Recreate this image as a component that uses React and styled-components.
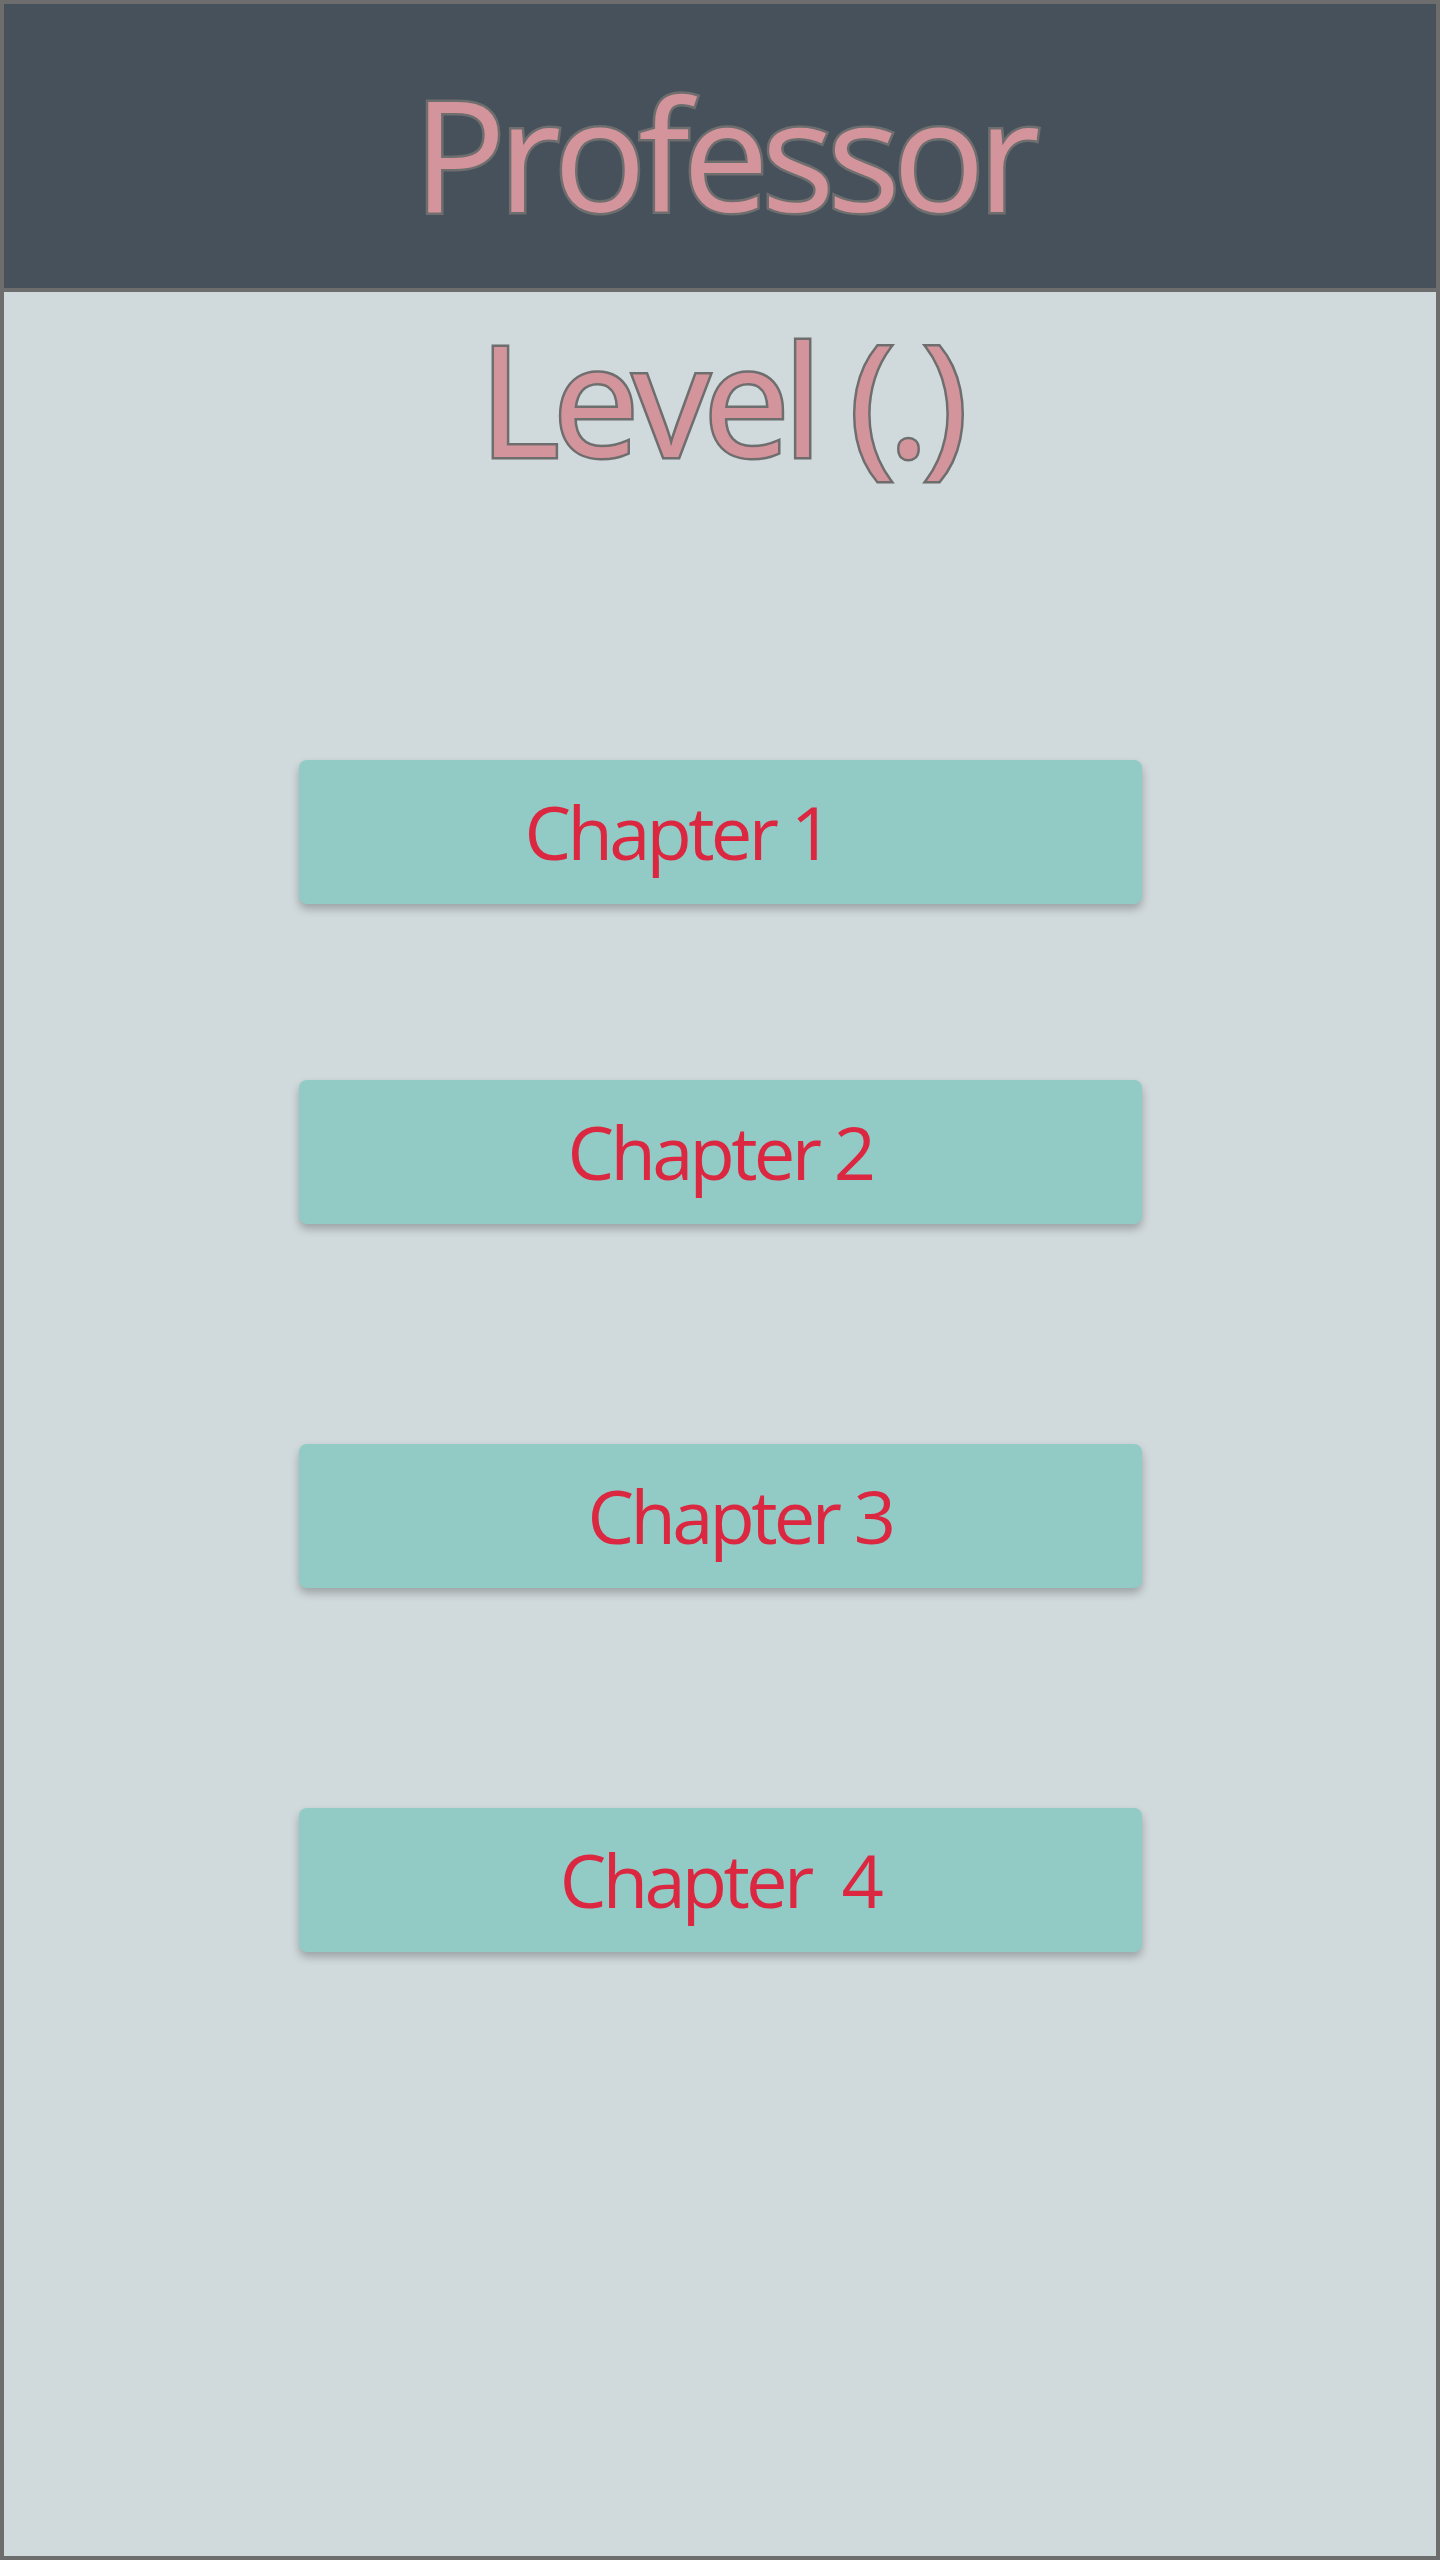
import styled, { createGlobalStyle } from "styled-components";

const GlobalStyle = createGlobalStyle`
  html, body {
    margin: 0;
    padding: 0;
    background: #d0d9dc;
  }
  * {
    box-sizing: border-box;
  }
`;

const chapters = [
  { label: "Chapter 1", top: 0, padRight: 86 },
  { label: "Chapter 2", top: 176 },
  { label: "Chapter 3", top: 220, padLeft: 40 },
  { label: "Chapter  4", top: 220 },
];

const App = () => {
  return (
    <>
      <GlobalStyle />
      <Page>
        <Header>
          <Title>Professor</Title>
        </Header>
        <Level>Level (.)</Level>

        <ChapterList>
          {chapters.map((c) => (
            <ChapterButton key={c.label} $top={c.top} $padLeft={c.padLeft} $padRight={c.padRight}>
              {c.label}
            </ChapterButton>
          ))}
        </ChapterList>
      </Page>
    </>
  );
};

const Page = styled.div`
  width: 1440px;
  height: 2560px;
  border: 4px solid #6d6d6d;
  background-color: #d0d9dc;
  display: flex;
  flex-direction: column;
  font-family: "Open Sans", "Noto Sans", sans-serif;
`;

const Header = styled.header`
  height: 288px;
  background-color: #47515b;
  border-bottom: 4px solid #6d6d6d;
  padding-top: 71px;
  text-align: center;
`;

const outlined = `
  color: #d4949c;
  -webkit-text-stroke: 5px #6e6e6e;
  paint-order: stroke fill;
  font-size: 154px;
  line-height: 1;
  font-weight: 400;
  margin: 0;
`;

const Title = styled.h1`
  ${outlined}
  letter-spacing: -0.05em;
  padding-left: 6px;
`;

const Level = styled.h2`
  ${outlined}
  letter-spacing: -0.042em;
  margin-top: 28px;
  text-align: center;
`;

const ChapterList = styled.div`
  display: flex;
  flex-direction: column;
  align-items: center;
  margin-top: 286px;
`;

const ChapterButton = styled.div`
  width: 843px;
  height: 144px;
  margin-top: ${(p) => p.$top}px;
  padding-left: ${(p) => p.$padLeft || 0}px;
  padding-right: ${(p) => p.$padRight || 0}px;
  background-color: #92cac5;
  border-radius: 8px;
  box-shadow: 0 5px 8px rgba(0, 0, 0, 0.25);
  display: flex;
  align-items: center;
  justify-content: center;
  color: #dc2741;
  font-size: 74px;
  line-height: 1;
  letter-spacing: -0.05em;
  white-space: pre;
  cursor: pointer;
`;

export default App;
